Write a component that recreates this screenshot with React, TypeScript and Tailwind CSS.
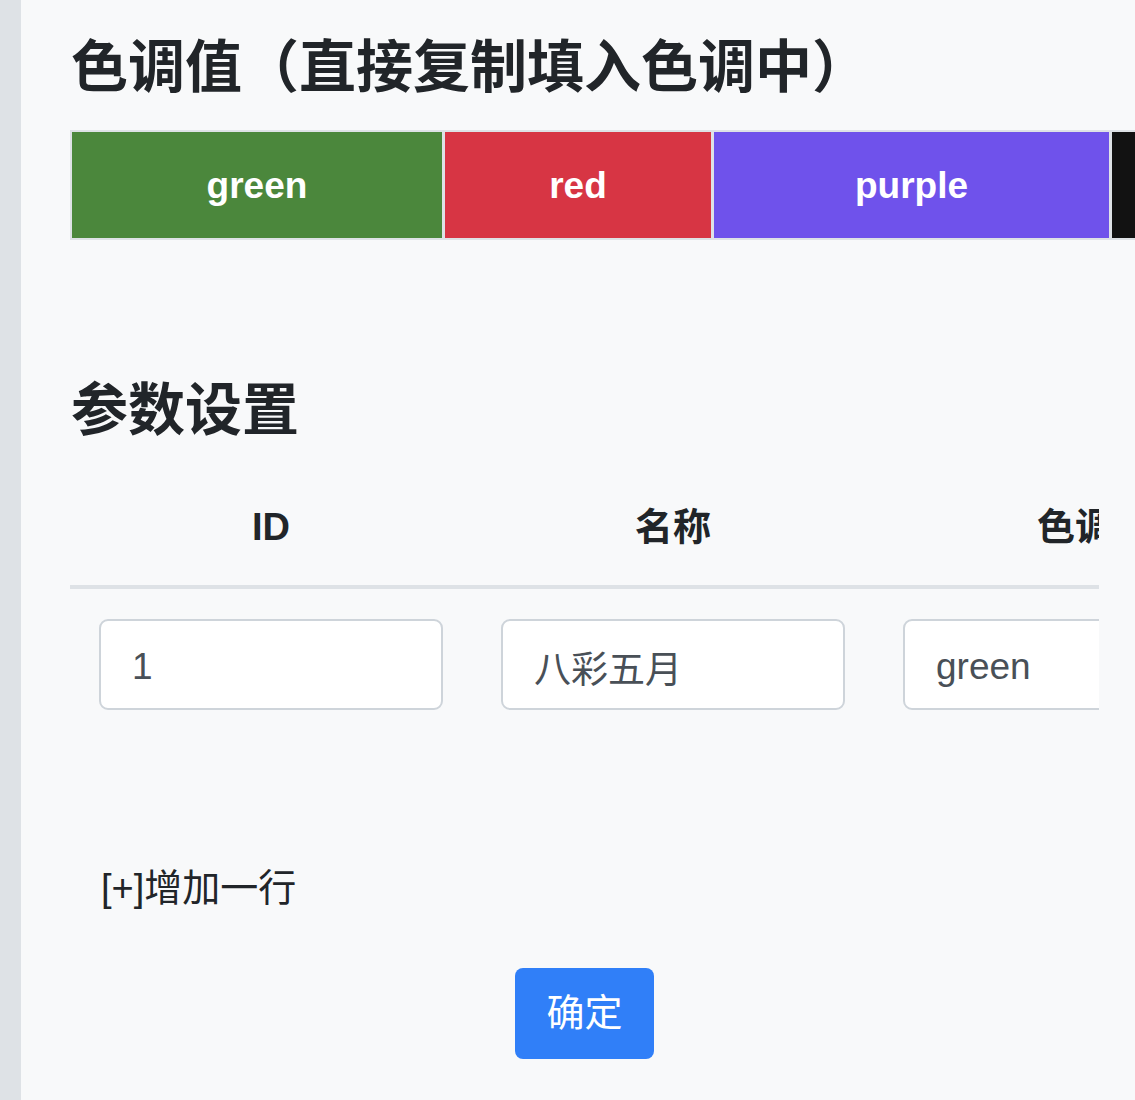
const swatches = [
  { name: 'green', bg: 'bg-[#4b873c]', w: 'w-[370px]' },
  { name: 'red', bg: 'bg-[#d73544]', w: 'w-[266px]' },
  { name: 'purple', bg: 'bg-[#6f52eb]', w: 'w-[395px]' },
  { name: 'black', bg: 'bg-[#121212]', w: 'w-[300px]' },
];

const columns = ['ID', '名称', '色调', '操作'];

const App = () => {
  return (
    <div className="flex min-h-[1100px] w-[1135px] overflow-hidden bg-[#f8f9fa] font-['Liberation_Sans','Noto_Sans_CJK_SC',sans-serif] text-[#212529]">
      {/* sidebar edge */}
      <div className="w-[21px] shrink-0 bg-[#dee2e6]" />

      <div className="ml-[49px] w-[1029px] shrink-0">
        <h2 className="pt-[33px] pl-[1px] text-[57px] font-bold leading-[1.2] whitespace-nowrap">
          色调值（直接复制填入色调中）
        </h2>

        {/* swatch strip */}
        <div className="mt-[29px] flex w-[1200px] gap-[3px] border-2 border-[#dee2e6] bg-[#dee2e6]">
          {swatches.map((s) => (
            <div
              key={s.name}
              className={`${s.bg} ${s.w} flex h-[106px] shrink-0 items-center justify-center text-[37px] font-bold text-white`}
            >
              {s.name}
            </div>
          ))}
        </div>

        <h2 className="mt-[136px] pl-[1px] text-[57px] font-bold leading-[1.2]">参数设置</h2>

        {/* params table */}
        <div className="mt-[26px] w-[1029px] overflow-hidden">
          <div className="w-[1608px]">
            <div className="flex h-[118px] border-b-4 border-[#dee2e6]">
              {columns.map((c) => (
                <div
                  key={c}
                  className="flex w-[402px] shrink-0 items-center justify-center text-[38px] font-bold"
                >
                  {c}
                </div>
              ))}
            </div>
            <div className="flex py-[30px]">
              {['1', '八彩五月', 'green'].map((v) => (
                <div key={v} className="w-[402px] shrink-0 px-[29px]">
                  <input
                    readOnly
                    value={v}
                    className="h-[91px] w-[344px] rounded-[9px] border-2 border-[#ced4da] bg-white px-[31px] pt-[5px] text-[37px] text-[#495057] outline-none"
                  />
                </div>
              ))}
            </div>
          </div>
        </div>

        <div className="mt-[126px] pl-[31px] text-[38px] leading-[1.2]">[+]增加一行</div>

        <div className="mt-[57px] flex justify-center">
          <button className="h-[91px] w-[139px] rounded-[8px] bg-[#307ff8] text-[38px] text-white">
            确定
          </button>
        </div>
      </div>
    </div>
  );
};

export default App;
